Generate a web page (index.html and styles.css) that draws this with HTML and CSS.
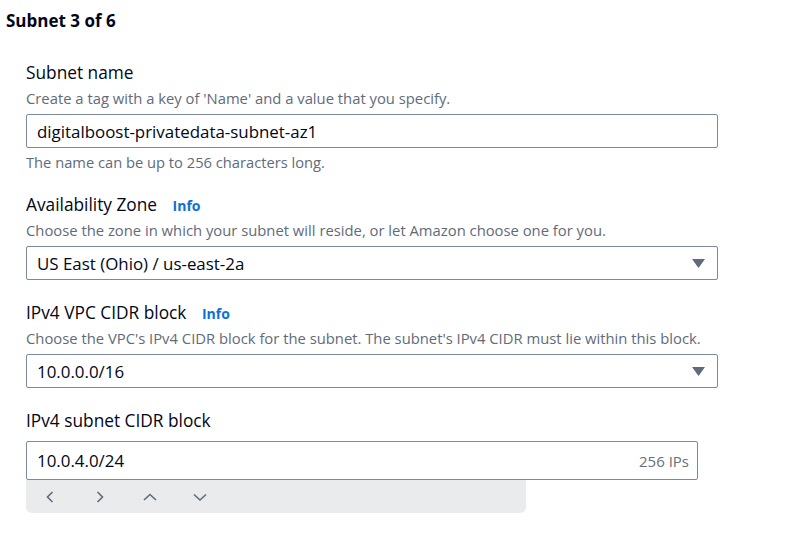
FILE: index.html
```html
<!DOCTYPE html>
<html lang="en">
<head>
<meta charset="utf-8">
<title>Subnet 3 of 6</title>
<link rel="stylesheet" href="styles.css">
</head>
<body>
<div class="page">
  <h2 class="title">Subnet 3 of 6</h2>
  <div class="fields">
    <div class="field">
      <div class="label">Subnet name</div>
      <div class="desc">Create a tag with a key of 'Name' and a value that you specify.</div>
      <div class="control input">digitalboost-privatedata-subnet-az1</div>
      <div class="constraint">The name can be up to 256 characters long.</div>
    </div>
    <div class="field">
      <div class="label">Availability Zone <span class="info">Info</span></div>
      <div class="desc">Choose the zone in which your subnet will reside, or let Amazon choose one for you.</div>
      <div class="control select">
        <span>US East (Ohio) / us-east-2a</span>
        <svg class="caret" width="13" height="9" viewBox="0 0 13 9"><path d="M0 0H13L6.5 9Z" fill="#5f6b7a"/></svg>
      </div>
    </div>
    <div class="field">
      <div class="label">IPv4 VPC CIDR block <span class="info">Info</span></div>
      <div class="desc">Choose the VPC's IPv4 CIDR block for the subnet. The subnet's IPv4 CIDR must lie within this block.</div>
      <div class="control select">
        <span>10.0.0.0/16</span>
        <svg class="caret" width="13" height="9" viewBox="0 0 13 9"><path d="M0 0H13L6.5 9Z" fill="#5f6b7a"/></svg>
      </div>
    </div>
    <div class="field last">
      <div class="label">IPv4 subnet CIDR block</div>
      <div class="cidr">
        <div class="control cidr-input">
          <span>10.0.4.0/24</span>
          <span class="ips">256 IPs</span>
        </div>
        <div class="stepper">
          <svg width="20" height="14" viewBox="0 0 20 14"><path d="M12.5 2L7.5 7L12.5 12" fill="none" stroke="#5f6b7a" stroke-width="1.6"/></svg>
          <svg width="20" height="14" viewBox="0 0 20 14"><path d="M7.5 2L12.5 7L7.5 12" fill="none" stroke="#5f6b7a" stroke-width="1.6"/></svg>
          <svg width="20" height="14" viewBox="0 0 20 14"><path d="M4 10L10 4.5L16 10" fill="none" stroke="#5f6b7a" stroke-width="1.6"/></svg>
          <svg width="20" height="14" viewBox="0 0 20 14"><path d="M4 4.5L10 10L16 4.5" fill="none" stroke="#5f6b7a" stroke-width="1.6"/></svg>
        </div>
      </div>
    </div>
  </div>
</div>
</body>
</html>
```
FILE: styles.css
```css
* { box-sizing: border-box; }
html, body {
  margin: 0;
  background: #ffffff;
}
body {
  font-family: "Open Sans", "Noto Sans", sans-serif;
  color: #000716;
}
.page {
  padding: 10px 0 0 6px;
}
.title {
  margin: 0;
  font-size: 17px;
  line-height: 22px;
  font-weight: 700;
  color: #000716;
}
.fields {
  margin-top: 30px;
  padding-left: 20px;
  width: 712px;
  display: flex;
  flex-direction: column;
  gap: 22px;
}
.field {
  display: flex;
  flex-direction: column;
}
.label {
  font-size: 17.3px;
  line-height: 22px;
  color: #000716;
}
.info {
  margin-left: 11px;
  font-size: 14px;
  line-height: 1;
  font-weight: 700;
  color: #0972d3;
}
.desc {
  margin-top: 4px;
  font-size: 14.8px;
  line-height: 20px;
  color: #5f6b7a;
  white-space: nowrap;
}
.control {
  margin-top: 6px;
  height: 34px;
  border: 1px solid #7d8998;
  border-radius: 2px;
  padding: 0 12px 0 10px;
  font-size: 16.9px;
  display: flex;
  align-items: center;
  justify-content: space-between;
  background: #fff;
}
.constraint {
  margin-top: 4px;
  font-size: 14.7px;
  line-height: 20px;
  color: #5f6b7a;
}
.field.last .cidr {
  margin-top: 9px;
  width: 672px;
}
.cidr-input {
  margin-top: 0;
  height: 39px;
  padding-right: 8px;
}
.ips {
  font-size: 15px;
  color: #687078;
}
.stepper {
  width: 500px;
  height: 33px;
  background: #e9ebed;
  border-radius: 0 0 6px 6px;
  display: flex;
  align-items: center;
  gap: 30px;
  padding-left: 14px;
}
.stepper svg { display: block; }
```
